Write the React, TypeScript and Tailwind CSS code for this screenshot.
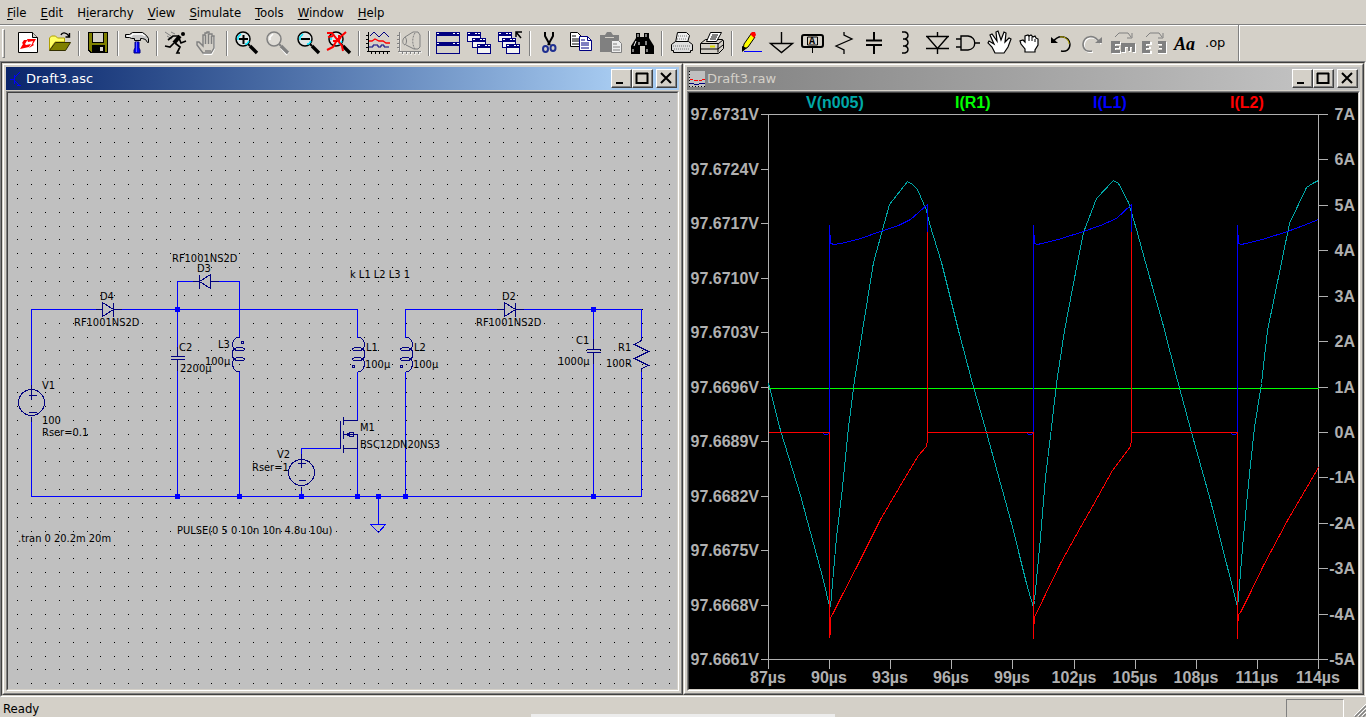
import React from 'react';
import { clsx } from 'clsx';

interface Tool {
  name: string;
  icon: React.ReactNode;
}

const MENUS = ['File', 'Edit', 'Hierarchy', 'View', 'Simulate', 'Tools', 'Window', 'Help'];
const MNEMONICS = [0, 0, 1, 0, 0, 0, 0, 0];

const NAVY = '#000080';
const GRAY = '#808080';
const FACE = '#d4d0c8';

/* ---------- toolbar icons, all on a 24px grid ---------- */

const Lens = ({ color = '#000', children }: { color?: string; children?: React.ReactNode }) => (
  <>
    <circle cx="9" cy="8" r="7" fill={color === '#000' ? '#dfe4e4' : '#dedbd5'} stroke={color} strokeWidth="1.5" />
    {color === '#000' && <path d="M4 9V6l3-3M11 13h2l2-3" fill="none" stroke="#00e5ff" strokeWidth="1.5" />}
    {color !== '#000' && <path d="M5 9V6l3-3M16 17l6 7M24 22l-7-7" fill="none" stroke="#fff" strokeWidth="1.5" />}
    <path d="M14 13l2 2" stroke={color} strokeWidth="2" />
    <path d="M16 15l7 7" stroke={color} strokeWidth="3.4" />
    {children}
  </>
);

const MiniWindow = ({ x, y }: { x: number; y: number }) => (
  <g shapeRendering="crispEdges">
    <rect x={x} y={y} width="14" height="10" fill={NAVY} />
    <rect x={x + 1} y={y + 4} width="12" height="5" fill="#f4f4f4" />
    <path d={`M${x + 1} ${y + 1.5}h2M${x + 8} ${y + 1.5}h2M${x + 11} ${y + 1.5}h2`} stroke="#fff" />
  </g>
);

const axes = 'M2 1v20M1 20h23M0 4h2M0 8h2M0 12h2M0 16h2M5 20v3M9 20v3M13 20v3M17 20v3M21 20v3';

const GROUPS: Tool[][] = [
  [
    {
      name: 'New schematic',
      icon: (
        <>
          <path d="M2.500 1.500h14l5 5v15h-19z" fill="#fff" stroke="#000" />
          <path d="M16.500 1.500v5h5" fill={FACE} stroke="#000" />
          <path d="M8 9l4-1-3 5 1 1 5-1-2 3-9 2 3-5-1-1zM11 8h9l-3 5 1 1-5 3 3-4 1-3-5 1z" fill="#f00" />
        </>
      ),
    },
    {
      name: 'Open',
      icon: (
        <>
          <path d="M2.500 19V7l2-2h4l2 2h7v4H8z" fill="#ff6" stroke="#b0a000" />
          <path d="M2.500 19.500l6-8h15l-5 8z" fill="#808000" stroke="#332f00" />
          <path d="M14 4c1-3 5-3 8 1M22.500 2v4h-4" fill="none" stroke="#000" strokeWidth="1.4" />
        </>
      ),
    },
  ],
  [
    {
      name: 'Save',
      icon: (
        <g shapeRendering="crispEdges">
          <path d="M2 1h20v21H4l-2-2z" fill="#000" />
          <path d="M3 2h18v19H5l-2-2z" fill="#808000" />
          <path d="M6 1h12v11H6z" fill="#000" />
          <path d="M7 2h10v9H7z" fill={FACE} />
          <path d="M6 14h13v7H6z" fill="#000" />
          <path d="M14 16h3v4h-3z" fill={FACE} />
        </g>
      ),
    },
  ],
  [
    {
      name: 'Control panel',
      icon: (
        <>
          <path d="M.5 3.500h4l3-2h10l4 3 2 3v4h-1l-2-3-3-1h-2v2h-6v-2h-3l-2-1h-4z" fill="#c8c8c8" stroke="#000" />
          <path d="M2 5h4l2-2h9l3 2" fill="none" stroke="#fff" strokeWidth="1.5" />
          <path d="M10 11h4v6l1 2v3H9v-3l1-2z" fill="#00f" stroke={NAVY} />
          <path d="M11.500 11v10" stroke="#66f" />
        </>
      ),
    },
  ],
  [
    {
      name: 'Run',
      icon: (
        <g fill="none">
          <path d="M1 1l6 4M3 5l5 3M7 1l4 2" stroke={GRAY} />
          <circle cx="19" cy="3" r="2" fill="#000" />
          <path d="M16 5l-6 7" stroke="#000" strokeWidth="4" />
          <path d="M15 5H9l-5 4M15 7l2 5 5-2M10 12l-4 4-5-1M11 12l5 4-3 6h3" stroke="#000" strokeWidth="1.7" />
        </g>
      ),
    },
    {
      name: 'Halt',
      icon: (
        <>
          <path d="M8 23l-5-8-1-3 2-1 4 4V4h2V2h2V1h2v2h3v2h2v12l-3 6z" fill="#fff" transform="translate(1 1)" />
          <path d="M8 22l-6-8v-3h2l4 4V4h2V2h2V1h2v2h3v2h2v12l-3 5z" fill={FACE} stroke={GRAY} strokeWidth="1.4" />
          <path d="M10.500 4v9M13.500 3v10M16.500 5v8M10 20h6" stroke={GRAY} strokeWidth="1.4" />
        </>
      ),
    },
  ],
  [
    { name: 'Zoom in', icon: <Lens><path d="M5 8h9M9.500 4v9" stroke="#000" strokeWidth="2" /></Lens> },
    { name: 'Pan', icon: <Lens color={GRAY} /> },
    { name: 'Zoom out', icon: <Lens><path d="M5 8h9" stroke="#000" strokeWidth="2" /></Lens> },
    {
      name: 'Zoom full extents',
      icon: (
        <Lens>
          <path d="M0 2h5l10 13 1 5M19 1L10 9l-4 7-6 3M1 6l5-1M12 4v7M6 10h5l3-4" fill="none" stroke="#f00" strokeWidth="2" />
        </Lens>
      ),
    },
  ],
  [
    {
      name: 'Autorange',
      icon: (
        <g fill="none">
          <path d={axes} stroke="#000" shapeRendering="crispEdges" />
          <path d="M4 5l4-4 5 5 5-5 5 5" stroke={NAVY} />
          <path d="M3 10h3l3-2 4 2h4l3 2h4" stroke="#f00" strokeWidth="1.3" />
          <path d="M3 16h4v-2h5v2h3v-2h3v2h5" stroke={NAVY} />
        </g>
      ),
    },
    {
      name: 'Plot limits',
      icon: (
        <g fill="none">
          <path d={axes} stroke="#fff" transform="translate(1 1)" />
          <path d={axes} stroke={GRAY} shapeRendering="crispEdges" />
          <path d="M8 6c-3 2-3 7 0 8M8 6c2 2 2 6 0 8M8 6l8-5h5l2 3v12l-2 2h-4l-8-4" stroke={GRAY} />
          <path d="M18 2c-3 4-3 12 0 16" stroke={GRAY} strokeDasharray="2 1" />
        </g>
      ),
    },
  ],
  [
    {
      name: 'Tile windows',
      icon: (
        <g shapeRendering="crispEdges">
          <path d="M0 1h24v22H0z" fill={NAVY} />
          <path d="M1 5h22v6H1zM1 15h22v7H1z" fill={FACE} />
          <path d="M1 2.500h2M17 2.500h2M21 2.500h2M1 12.500h2M17 12.500h2M21 12.500h2" stroke="#fff" />
        </g>
      ),
    },
    { name: 'Cascade windows', icon: <><MiniWindow x={0} y={1} /><MiniWindow x={5} y={7} /><MiniWindow x={10} y={13} /></> },
    {
      name: 'Close all windows',
      icon: (
        <>
          <MiniWindow x={0} y={1} />
          <MiniWindow x={4} y={7} />
          <MiniWindow x={8} y={13} />
          <path d="M18 6V1h6M18 1l5 6" fill="none" stroke="#000" strokeWidth="1.5" />
        </>
      ),
    },
  ],
  [
    {
      name: 'Cut',
      icon: (
        <g fill="none">
          <path d="M8 1v4l5 9M16 1v4l-5 9" stroke="#000" strokeWidth="2" />
          <ellipse cx="8.500" cy="18" rx="2.500" ry="3" stroke="#1f2f90" strokeWidth="2" />
          <ellipse cx="16" cy="17" rx="2.500" ry="3" stroke="#1f2f90" strokeWidth="2" />
        </g>
      ),
    },
    {
      name: 'Copy',
      icon: (
        <>
          <path d="M2.500 1.500h7l4 4v10h-11z" fill="#fff" stroke="#000" />
          <path d="M4 5h4M4 8h7M4 10h7M4 13h7" stroke="#000" />
          <path d="M11.500 5.500h8l4 4v10h-12z" fill="#fff" stroke={NAVY} />
          <path d="M19.500 5.500v4h4M13 9h4M13 12h8M13 14h8M13 17h8" fill="none" stroke={NAVY} />
        </>
      ),
    },
    {
      name: 'Paste',
      icon: (
        <>
          <path d="M1 4h5l2-3h4l2 3h6v17H1z" fill={GRAY} />
          <path d="M6 6.500h9" stroke="#d4d0c8" />
          <path d="M12.500 9.500h7l3 3v9h-10z" fill="#eee" stroke={GRAY} />
          <path d="M14 13h4M14 16h7M14 19h7" stroke={GRAY} />
        </>
      ),
    },
    {
      name: 'Find',
      icon: (
        <>
          <path d="M6 2h4v4h4V2h5v5l5 8v8h-9v-8h-5v8H1v-8l5-8z" fill="#000" />
          <path d="M8 3v3M16 3v3M6 10l-2 5M9 11v3M16 10v4M3 18v3M17 18v3" stroke="#fff" />
        </>
      ),
    },
  ],
  [
    {
      name: 'Print setup',
      icon: (
        <>
          <path d="M6.500 11.500l2-10h9l3 3-2 7" fill="#eee" stroke="#000" />
          <path d="M2.500 13.500l4-3h13l4 3v6h-2v2h-17v-2h-2z" fill="#ddd" stroke="#000" />
          <path d="M9 5h9M8 8h9M4 15h18M5 18h16" stroke="#777" strokeDasharray="1 1" />
        </>
      ),
    },
    {
      name: 'Print',
      icon: (
        <>
          <path d="M.5 12.500l5-4h17l1 1v8l-5 5H.5z" fill={FACE} stroke="#000" />
          <path d="M6.500 10.500l4-9h11l-5 9z" fill="#fff" stroke="#000" />
          <path d="M12 4h6M11 6h6M10 8h6" stroke="#000" />
          <path d="M1 12.500h17v9M1 18h17M18 13l5-4M18 18l5-4" fill="none" stroke="#000" />
          <path d="M10 15.500h5" stroke="#dd0" strokeWidth="2" />
        </>
      ),
    },
  ],
  [
    {
      name: 'Draw wire',
      icon: (
        <>
          <path d="M4 19l1-6 7-10 4 3-7 10z" fill="#ff0" stroke="#000" />
          <path d="M11 3l2-2h3l1 3-2 3z" fill="#f00" />
          <path d="M3 15v6l5-4z" fill="#000" />
          <path d="M5 20.500h18" stroke="#00f" />
        </>
      ),
    },
    { name: 'Ground', icon: <path d="M11.500 1v11M.5 12.500h22l-11 9z" fill="none" stroke="#000" strokeWidth="1.4" /> },
    {
      name: 'Label net',
      icon: (
        <>
          <rect x="1" y="4" width="21" height="12" rx="2" fill="none" stroke="#000" strokeWidth="2" />
          <path d="M11.500 16v6M6.500 6v8h10V6z" fill="none" stroke="#000" />
          <text x="11" y="13" textAnchor="middle" fontFamily="Liberation Mono, monospace" fontSize="10" fontWeight="700">A</text>
        </>
      ),
    },
    { name: 'Resistor', icon: <path d="M12 1v3l8 4-16 7 8 4v4" fill="none" stroke="#000" strokeWidth="1.3" /> },
    { name: 'Capacitor', icon: <path d="M11 1v8M3 9.500h16M3 14h16M11 14v9" fill="none" stroke="#000" strokeWidth="2" /> },
    { name: 'Inductor', icon: <path d="M8 1h3c4 1 4 6 0 7H9h2c4 1 4 6 0 7H9h2c4 1 4 6 0 7H8" fill="none" stroke="#000" strokeWidth="1.4" /> },
    { name: 'Diode', icon: <path d="M12.500 1v4M1 5.500h23M2.500 6l10 11.500 10-11.500M1 17.500h23M12.500 18v5" fill="none" stroke="#000" strokeWidth="1.4" /> },
    { name: 'Component', icon: <path d="M0 8h5M0 16h5M5 5h7c9 1 9 13 0 14H5zM19 12h5" fill="none" stroke="#000" strokeWidth="1.4" /> },
    {
      name: 'Move',
      icon: (
        <path
          d="M8 22l-3-6-4-4 1-2 5 3-4-9 2-1 5 7-1-9 2-1 3 9 3-8 2 1-1 9 4-4 2 1-3 8-4 6z"
          fill="#fff" stroke="#000" strokeWidth="1.2"
        />
      ),
    },
    {
      name: 'Drag',
      icon: (
        <>
          <path d="M7 21v-3l-4-5-1-3 3-1 2 2V5l3-1 1 1 2-1 2 2 2-1 1 2 2 1v6l-3 5v2z" fill="#fff" stroke="#000" strokeWidth="1.2" />
          <path d="M11 5v5M14 6v4M17 8v3" stroke="#000" />
        </>
      ),
    },
    {
      name: 'Undo',
      icon: (
        <>
          <path d="M4 11c6-9 16-5 17 2 0 6-4 8-9 7" fill="none" stroke="#000" strokeWidth="1.4" />
          <path d="M11 6c5-1 9 3 9 7" fill="none" stroke="#c0b000" />
          <path d="M2 6v6h7z" fill="#000" />
        </>
      ),
    },
    {
      name: 'Redo',
      icon: (
        <>
          <path d="M20 12C14 2 4 5 3 13c0 6 4 8 9 7" fill="none" stroke="#fff" strokeWidth="1.6" transform="translate(1 1)" />
          <path d="M20 12C14 2 4 5 3 13c0 6 4 8 9 7" fill="none" stroke={GRAY} strokeWidth="1.6" />
          <path d="M22 6v6h-7z" fill={GRAY} />
        </>
      ),
    },
    {
      name: 'Rotate',
      icon: (
        <>
          <path d="M1 11h9v3H5v2h4v2H5v2h5v3H1zM11 13h14v9h-3v-5h-2v4h-2v-4h-3v5h-4z" fill="#fff" />
          <path d="M0 10h9v3H4v2h4v2H4v2h5v3H0zM10 12h14v9h-3v-5h-2v4h-2v-4h-3v5h-4z" fill={GRAY} />
          <path d="M4 6l4-4h9l3 4M21 2v5h-5" fill="none" stroke={GRAY} />
        </>
      ),
    },
    {
      name: 'Mirror',
      icon: (
        <>
          <path d="M1 11h9v3H5v2h4v2H5v2h5v3H1zM25 11h-9v3h5v2h-4v2h4v2h-5v3h9z" fill="#fff" />
          <path d="M0 10h8v3H4v2h3v2H4v2h4v3H0zM24 10h-8v3h4v2h-3v2h3v2h-4v3h8z" fill={GRAY} />
          <path d="M4 6l4-4h9l3 4M21 2v5h-5" fill="none" stroke={GRAY} />
        </>
      ),
    },
    {
      name: 'Text',
      icon: (
        <text x="1" y="19" fontFamily="Liberation Serif, serif" fontSize="18" fontWeight="700" fontStyle="italic">Aa</text>
      ),
    },
    {
      name: 'SPICE directive',
      icon: <text x="1" y="16" fontFamily="DejaVu Sans, sans-serif" fontSize="13">.op</text>,
    },
  ],
];

const ToolButton: React.FC<Tool> = ({ name, icon }) => (
  <button aria-label={name} className="flex h-[34px] w-[31px] shrink-0 items-center justify-center">
    <svg width="24" height="24" viewBox="0 0 24 24" className="overflow-visible">{icon}</svg>
  </button>
);

const Divider = () => (
  <div className="ml-1 mr-[2px] h-[25px] w-[2px] shrink-0 border-l border-[#808080] bg-white" />
);

/* ---------- schematic ---------- */

const gridDots = () => {
  let d = '';
  for (let i = 0; i < 48; i++) {
    for (let j = 0; j < 43; j++) {
      d += `M${Math.floor(17.65 + 13.875 * i)} ${Math.floor(101.25 + 13.87 * j)}h1v1h-1z`;
    }
  }
  return d;
};

const WIRES = [
  'M31 389V309H102M114 309H357V337M31 416V496H641V369',
  'M177 356V281H199M211 281H239V337M239 371V496M177 360V496',
  'M357 371V420M357 448V496M405 337V309H504M516 309H641V340M405 371V496',
  'M593 309V349M593 353V496M301 458V448H340M301 486V496',
  'M378 496V524M370 524H385L378 532Z',
].join('');

const SYMBOLS = [
  // D4, D2, D3
  'M95 309H102M102 302V316L113 309ZM113 302V316M113 309H121',
  'M496 309H504M504 302V316L515 309ZM515 302V316M515 309H523',
  'M192 281H199M210 274V288L199 281ZM199 274V288M210 281H218',
  // C2, C1
  'M170 356H184M170 359H184M177 346V356M177 359V370',
  'M586 349H600M586 352H600M593 338V349M593 352V363',
  // R1
  'M641 337V340L634 344L648 351L634 358L648 365L641 368V371',
  // M1
  'M340 420V448M343 416V424M343 430V438M343 444V452M343 420H357M343 434H357V448H343M346 434L350 432H353V436H350Z',
  // V1, V2
  'M31 384V399M28 395H36M28 412H36M31 416V421M301 453V467M297 463H305M298 480H305M301 486V490',
].join('');

const JUNCTIONS = [[177, 309], [593, 309], [177, 496], [239, 496], [301, 496], [357, 496], [378, 496], [405, 496], [593, 496]];

const LABELS: [number, number, string][] = [
  [100, 300, 'D4'], [74, 326, 'RF1001NS2D'], [172, 262, 'RF1001NS2D'], [197, 272, 'D3'],
  [179, 351, 'C2'], [180, 372, '2200µ'], [218, 348, 'L3'], [205, 365, '100µ'],
  [42, 389, 'V1'], [42, 424, '100'], [42, 436, 'Rser=0.1'], [18, 542, '.tran 0 20.2m 20m'],
  [177, 534, 'PULSE(0 5 0 10n 10n 4.8u 10u)'], [350, 278, 'k L1 L2 L3 1'],
  [366, 351, 'L1'], [365, 368, '100µ'], [414, 351, 'L2'], [413, 368, '100µ'],
  [360, 431, 'M1'], [360, 448, 'BSC12DN20NS3'], [277, 458, 'V2'], [252, 471, 'Rser=1'],
  [502, 300, 'D2'], [476, 326, 'RF1001NS2D'], [576, 344, 'C1'], [558, 365, '1000µ'],
  [618, 351, 'R1'], [606, 367, '100R'],
];

const Coil = ({ x, flip = false }: { x: number; flip?: boolean }) => (
  <g transform={`translate(${x} 337)${flip ? ' scale(-1 1)' : ''}`} fill="none" stroke={NAVY}>
    <path d="M0 0h3c4 3 5 7 3 11-2 3-11 3-11 1s9-3 11 0c2 3 2 6 0 9-2 3-11 3-11 1s9-3 11 0c2 4 1 9-3 12h-3" />
    <circle cx={flip ? -3 : -4} cy={flip ? 5 : 29} r="1" />
  </g>
);

const Schematic = () => (
  <svg viewBox="8 93 669 596" className="block h-full w-full bg-[#c0c0c0]" role="img" aria-label="Schematic">
    <path d={gridDots()} fill="#000" shapeRendering="crispEdges" />
    <g transform="translate(.5 .5)" fill="none" shapeRendering="crispEdges">
      <path d={WIRES} stroke="#00f" />
      <path d={SYMBOLS} stroke={NAVY} />
      <circle cx="31" cy="402" r="13" stroke={NAVY} />
      <circle cx="301" cy="472" r="13" stroke={NAVY} />
      <Coil x={239} flip />
      <Coil x={357} />
      <Coil x={405} />
    </g>
    {JUNCTIONS.map(([x, y]) => (
      <rect key={`${x}-${y}`} x={x - 2} y={y - 2} width="5" height="5" fill="#00f" />
    ))}
    <g fontFamily="DejaVu Sans Condensed, DejaVu Sans, sans-serif" fontSize="11" fill="#000">
      {LABELS.map(([x, y, text]) => (
        <text key={`${x}-${y}`} x={x} y={y}>{text}</text>
      ))}
    </g>
  </svg>
);

/* ---------- waveform plot ---------- */

const VOLTS = ['97.6731V', '97.6724V', '97.6717V', '97.6710V', '97.6703V', '97.6696V', '97.6689V', '97.6682V', '97.6675V', '97.6668V', '97.6661V'];
const AMPS = ['7A', '6A', '5A', '4A', '3A', '2A', '1A', '0A', '-1A', '-2A', '-3A', '-4A', '-5A'];
const TIMES = ['87µs', '90µs', '93µs', '96µs', '99µs', '102µs', '105µs', '108µs', '111µs', '114µs'];

const voltY = (i: number) => Math.round(114 + i * 54.5);
const ampY = (i: number) => Math.round(114 + i * 45.417);
const timeX = (i: number) => Math.round(768 + i * 61.11);

const TRACES = [
  {
    name: 'V(n005)', x: 806, color: '#00a8a8',
    d: 'M768 383L780 430L800 495L813 543L823 580L829 606L830 606L832 583L836 537L842 487L848 427L854 380L862 330L873 262L889 204L907 181L912 184L917 189L926 210L929 223L941 262L958 330L972 383L986 432L1013 530L1019 555L1026 583L1033 607L1034 600L1040 537L1045 477L1051 427L1056 383L1064 330L1077 262L1083 232L1096 198L1113 180L1118 183L1128 202L1136 229L1145 262L1162 322L1177 380L1191 432L1210 500L1227 567L1237 606L1238 597L1242 547L1248 483L1254 427L1261 383L1267 330L1281 262L1289 223L1306 187L1312 183L1318 180',
  },
  { name: 'I(R1)', x: 955, color: '#00ff00', d: 'M768 388H1318' },
  {
    name: 'I(L1)', x: 1093, color: '#0000ff',
    d: 'M822 432L824 434H827L829 432V225L830 243L834 244L845 242L860 238L883 230L898 225L910 219L918 212L927 204V432M1026 432L1028 434H1031L1033 432V225L1034 243L1037 244L1058 239L1083 231L1100 225L1116 218L1131 204V432M1230 432L1232 434H1235L1237 432V225L1238 243L1241 244L1262 239L1287 231L1303 225L1318 219',
  },
  {
    name: 'I(L2)', x: 1230, color: '#ff0000',
    d: 'M768 432H829V637M830 634V617L832 614L840 598L857 565L880 519L890 502L900 485L918 455L926 446L927 440V231M927 432H1033V638M1034 623V616L1037 611L1043 598L1060 563L1080 527L1097 497L1112 470L1130 446L1131 440V231M1131 432H1237V638M1238 620V614L1240 612L1250 592L1263 565L1287 520L1318 467',
  },
];

const Waveform = () => (
  <svg viewBox="689 93 669 596" className="block h-full w-full bg-black" role="img" aria-label="Waveform plot">
    <g transform="translate(.5 .5)" fill="none" shapeRendering="crispEdges">
      <g stroke="#b0b0b0">
        <rect x="768" y="114" width="550" height="545" />
        {VOLTS.map((v, i) => <path key={v} d={`M760 ${voltY(i)}h8`} />)}
        {AMPS.map((a, i) => <path key={a} d={`M1318 ${ampY(i)}h9`} />)}
        {TIMES.map((t, i) => <path key={t} d={`M${timeX(i)} 659v9`} />)}
      </g>
      {TRACES.map((t) => <path key={t.name} d={t.d} stroke={t.color} />)}
    </g>
    <g fontFamily="Liberation Sans, Arial, sans-serif" fontSize="16" fontWeight="700" fill="#b0b0b0">
      {VOLTS.map((v, i) => <text key={v} x="759" y={voltY(i) + 6} textAnchor="end">{v}</text>)}
      {AMPS.map((a, i) => <text key={a} x="1355" y={ampY(i) + 6} textAnchor="end">{a}</text>)}
      {TIMES.map((t, i) => <text key={t} x={timeX(i)} y="683" textAnchor="middle">{t}</text>)}
      {TRACES.map((t) => <text key={t.name} x={t.x} y="108" fill={t.color}>{t.name}</text>)}
    </g>
  </svg>
);

/* ---------- child windows ---------- */

const CaptionButton = ({ label, d, className }: { label: string; d: string; className?: string }) => (
  <button
    aria-label={label}
    className={clsx(
      'h-[19px] w-[21px] border border-t-white border-l-white border-r-[#404040] border-b-[#404040]',
      'bg-[#d4d0c8] shadow-[inset_-1px_-1px_0_#808080]',
      className
    )}
  >
    <svg width="19" height="17" viewBox="0 0 19 17">
      <path d={d} fill="none" stroke="#000" strokeWidth="2" />
    </svg>
  </button>
);

interface ChildWindowProps {
  title: string;
  active?: boolean;
  icon: React.ReactNode;
  children: React.ReactNode;
}

const ChildWindow: React.FC<ChildWindowProps> = ({ title, active = false, icon, children }) => (
  <section className="flex min-w-0 flex-1 border border-t-[#d4d0c8] border-l-[#d4d0c8] border-r-[#404040] border-b-[#404040]">
    <div className="flex min-w-0 flex-1 flex-col border border-t-white border-l-white border-r-[#808080] border-b-[#808080] bg-[#d4d0c8] p-[2px]">
      <header
        className={clsx(
          'mb-px flex h-[23px] shrink-0 items-center bg-linear-to-r to-90% pl-[2px] pr-[2px]',
          active ? 'from-[#0a246a] to-[#a6caf0] text-white' : 'from-[#808080] to-[#c0c0c0] text-[#d4d0c8]'
        )}
      >
        <svg width="16" height="16" viewBox="0 0 16 16" shapeRendering="crispEdges">{icon}</svg>
        <h2 className="ml-[2px] flex-1 truncate font-['DejaVu_Sans',sans-serif] text-[13px] leading-5">{title}</h2>
        <CaptionButton label="Minimize" d="M4 13h7" />
        <CaptionButton label="Maximize" d="M3 3.500h12M3.500 3v10h11V3" />
        <CaptionButton label="Close" d="M4 3l10 10M14 3L4 13" className="ml-[3px]" />
      </header>
      <div className="flex min-h-0 flex-1 border border-t-[#808080] border-l-[#808080] border-r-white border-b-white">
        <div className="min-w-0 flex-1 border border-t-[#404040] border-l-[#404040] border-r-[#d4d0c8] border-b-[#d4d0c8]">
          {children}
        </div>
      </div>
    </div>
  </section>
);

export default function App() {
  return (
    <div className="relative flex h-screen flex-col overflow-hidden bg-[#d4d0c8] font-['DejaVu_Sans_Condensed','DejaVu_Sans',sans-serif] text-[13px] text-black">
      <nav className="flex h-6 shrink-0 items-center pt-[2px]">
        {MENUS.map((menu, i) => (
          <button key={menu} className="px-[7px] leading-5">
            {menu.slice(0, MNEMONICS[i])}
            <span className="underline underline-offset-2">{menu[MNEMONICS[i]]}</span>
            {menu.slice(MNEMONICS[i] + 1)}
          </button>
        ))}
      </nav>

      <div className="flex h-[37px] shrink-0 border-t border-[#808080] shadow-[inset_0_1px_0_#fff]">
        <div className="flex items-center border-r border-[#808080] pr-[7px]">
          <div className="ml-[2px] mr-[7px] h-[29px] w-[3px] border border-t-white border-l-white border-r-[#808080] border-b-[#808080]" />
          {GROUPS.map((group, i) => (
            <React.Fragment key={group[0].name}>
              {i > 0 && <Divider />}
              {group.map((tool) => <ToolButton key={tool.name} {...tool} />)}
            </React.Fragment>
          ))}
        </div>
        <div className="mt-px w-px bg-white" />
      </div>

      <main className="flex min-h-0 flex-1 border border-t-[#808080] border-l-[#808080] border-r-white border-b-white">
        <div className="flex min-w-0 flex-1 border border-t-[#404040] border-l-[#404040] border-r-[#d4d0c8] border-b-[#d4d0c8]">
          <ChildWindow
            title="Draft3.asc"
            active
            icon={<path d="M2 8h4M6 4v9M7 6l5-5M7 10l5 5M9 14h4" fill="none" stroke="#00f" />}
          >
            <Schematic />
          </ChildWindow>
          <ChildWindow
            title="Draft3.raw"
            icon={
              <>
                <path d="M0 0h16v16H0z" fill="#c0c0c0" />
                <path d="M.5 0v16M0 15.500h16" stroke="#000" strokeDasharray="1 2" />
                <path d="M1 8.500h3M5 9.500h4M10 9.500h3M13 8.500h3" stroke="#f00" />
                <path d="M1 12.500h4M5 13.500h5M10 12.500h6" stroke={NAVY} />
              </>
            }
          >
            <Waveform />
          </ChildWindow>
        </div>
      </main>

      <footer className="flex h-5 shrink-0 items-end justify-between pl-[3px]">
        <span className="leading-[17px]">Ready</span>
        <div className="flex items-end">
          <div className="mr-[10px] h-[18px] w-[58px] border-l border-r border-t border-t-[#808080] border-l-[#808080] border-r-white" />
          <svg width="12" height="14" viewBox="0 0 12 14">
            <path d="M0 13L12 1M4 13l8-8M8 13l4-4" stroke="#fff" />
            <path d="M1 14L12 3M5 14l7-7M9 14l3-3" stroke={GRAY} strokeWidth="1.5" />
          </svg>
        </div>
      </footer>
      <div className="absolute bottom-0 left-[531px] h-[3px] w-[304px] bg-[#ececec]" />
    </div>
  );
}
